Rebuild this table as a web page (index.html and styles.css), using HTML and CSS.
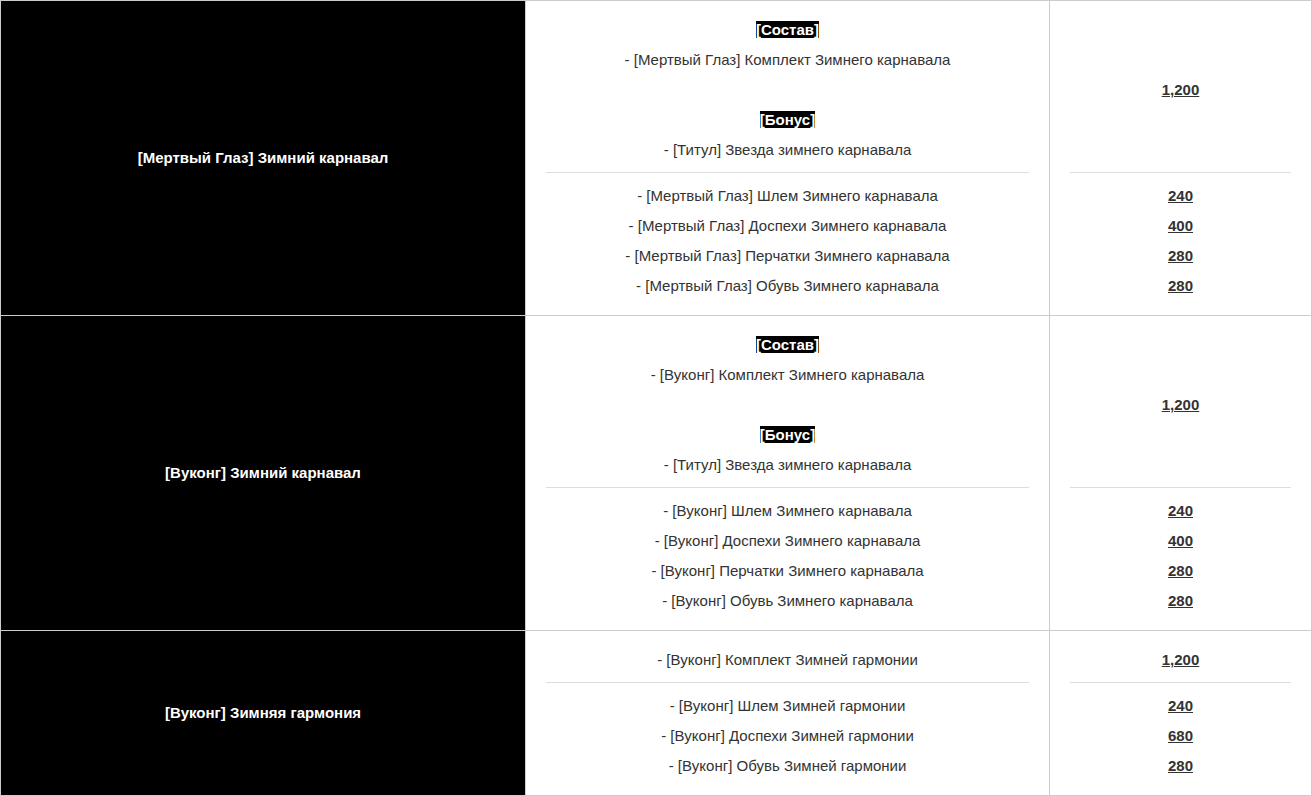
FILE: index.html
```html
<!DOCTYPE html>
<html lang="ru">
<head>
<meta charset="utf-8">
<link rel="stylesheet" href="styles.css">
</head>
<body>
<div class="table">
  <div class="set">
    <div class="name">[Мертвый Глаз] Зимний карнавал</div>
    <div class="mid top">
      <div><span class="badge">[Состав]</span></div>
      <div>- [Мертвый Глаз] Комплект Зимнего карнавала</div>
      <div>&nbsp;</div>
      <div><span class="badge">[Бонус]</span></div>
      <div>- [Титул] Звезда зимнего карнавала</div>
    </div>
    <div class="price top"><span class="num">1,200</span></div>
    <div class="mid bottom"><div class="list">
      <div>- [Мертвый Глаз] Шлем Зимнего карнавала</div>
      <div>- [Мертвый Глаз] Доспехи Зимнего карнавала</div>
      <div>- [Мертвый Глаз] Перчатки Зимнего карнавала</div>
      <div>- [Мертвый Глаз] Обувь Зимнего карнавала</div>
    </div></div>
    <div class="price bottom"><div class="list">
      <div><span class="num">240</span></div>
      <div><span class="num">400</span></div>
      <div><span class="num">280</span></div>
      <div><span class="num">280</span></div>
    </div></div>
  </div>
  <div class="set">
    <div class="name">[Вуконг] Зимний карнавал</div>
    <div class="mid top">
      <div><span class="badge">[Состав]</span></div>
      <div>- [Вуконг] Комплект Зимнего карнавала</div>
      <div>&nbsp;</div>
      <div><span class="badge">[Бонус]</span></div>
      <div>- [Титул] Звезда зимнего карнавала</div>
    </div>
    <div class="price top"><span class="num">1,200</span></div>
    <div class="mid bottom"><div class="list">
      <div>- [Вуконг] Шлем Зимнего карнавала</div>
      <div>- [Вуконг] Доспехи Зимнего карнавала</div>
      <div>- [Вуконг] Перчатки Зимнего карнавала</div>
      <div>- [Вуконг] Обувь Зимнего карнавала</div>
    </div></div>
    <div class="price bottom"><div class="list">
      <div><span class="num">240</span></div>
      <div><span class="num">400</span></div>
      <div><span class="num">280</span></div>
      <div><span class="num">280</span></div>
    </div></div>
  </div>
  <div class="set">
    <div class="name">[Вуконг] Зимняя гармония</div>
    <div class="mid top">
      <div>- [Вуконг] Комплект Зимней гармонии</div>
    </div>
    <div class="price top"><span class="num">1,200</span></div>
    <div class="mid bottom"><div class="list">
      <div>- [Вуконг] Шлем Зимней гармонии</div>
      <div>- [Вуконг] Доспехи Зимней гармонии</div>
      <div>- [Вуконг] Обувь Зимней гармонии</div>
    </div></div>
    <div class="price bottom"><div class="list">
      <div><span class="num">240</span></div>
      <div><span class="num">680</span></div>
      <div><span class="num">280</span></div>
    </div></div>
  </div>
</div>
</body>
</html>
```
FILE: styles.css
```css
html, body {
  margin: 0;
  padding: 0;
  background: #fff;
}
body {
  font-family: "Liberation Sans", Arial, sans-serif;
  font-size: 15px;
  color: #333;
}
.table {
  width: 1312px;
  box-sizing: border-box;
  border-top: 1px solid #ccc;
  border-left: 1px solid #ccc;
  border-right: 1px solid #ccc;
}
.set {
  display: grid;
  grid-template-columns: 525px 524px 261px;
  grid-template-rows: auto auto;
  border-bottom: 1px solid #ccc;
}
.name {
  grid-row: 1 / span 2;
  grid-column: 1;
  background: #000;
  color: #fff;
  font-weight: bold;
  display: flex;
  align-items: center;
  justify-content: center;
  padding-bottom: 2px;
  border-right: 1px solid #ccc;
}
.mid {
  grid-column: 2;
  border-right: 1px solid #ccc;
  text-align: center;
  line-height: 30px;
}
.price {
  grid-column: 3;
  text-align: center;
  line-height: 30px;
}
.top {
  grid-row: 1;
  padding: 14px 20px 7px;
}
.price.top {
  display: flex;
  align-items: center;
  justify-content: center;
}
.bottom {
  grid-row: 2;
  padding: 0 20px 14px;
}
.list {
  border-top: 1px solid #ddd;
  padding-top: 8px;
}
.badge {
  background: #000;
  color: #fff;
  font-weight: bold;
}
.num {
  font-weight: bold;
  text-decoration: underline;
  color: #333;
}
```
